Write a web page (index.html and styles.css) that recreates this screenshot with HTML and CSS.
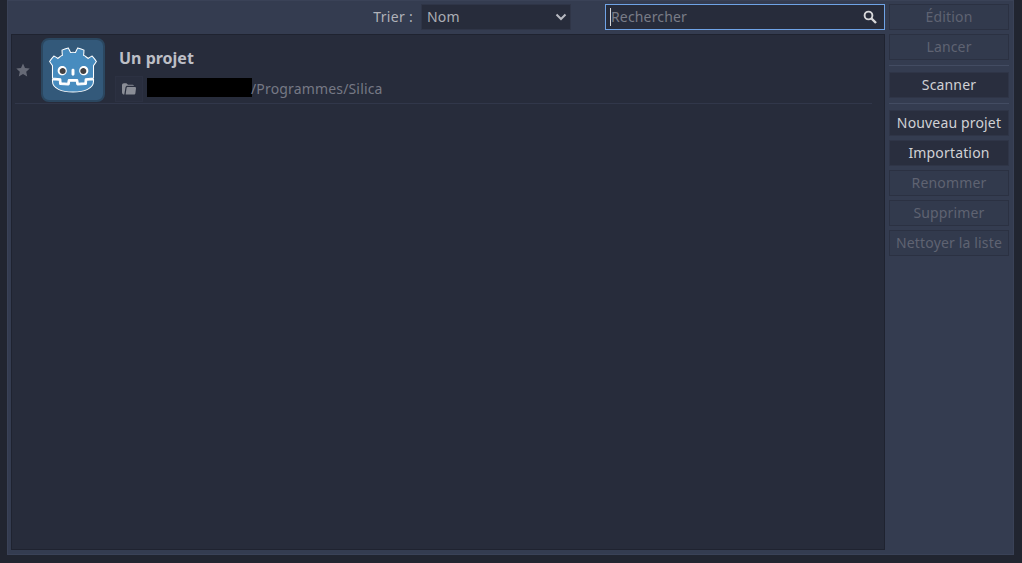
FILE: index.html
```html
<!DOCTYPE html>
<html lang="fr">
<head>
<meta charset="utf-8">
<title>Projets</title>
<link rel="stylesheet" href="styles.css">
</head>
<body>
<div class="window">
  <main class="main">
    <div class="toolbar">
      <span class="sort-label">Trier :</span>
      <div class="select">
        <span class="field-text">Nom</span>
        <svg class="chevron" width="12" height="8" viewBox="0 0 12 8"><path d="M1.5 1.5 6 6l4.5-4.5" fill="none" stroke="#b8bac2" stroke-width="2"/></svg>
      </div>
      <div class="search">
        <span class="caret"></span>
        <span class="placeholder field-text">Rechercher</span>
        <svg class="search-icon" width="14" height="14" viewBox="0 0 14 14"><circle cx="5.5" cy="5.5" r="3.9" fill="none" stroke="#d8d8da" stroke-width="1.9"/><path d="M8.5 8.5 13 13" stroke="#d8d8da" stroke-width="2.4"/></svg>
      </div>
    </div>
    <div class="list">
      <div class="row">
        <svg class="star" width="14" height="14" viewBox="0 0 14 14"><path d="M7 .6 9 5l4.7.5-3.5 3.2 1 4.7L7 11l-4.2 2.4 1-4.7L.3 5.5 5 5z" fill="#666a76"/></svg>
        <svg class="logo" width="64" height="64" viewBox="0 0 128 128">
          <rect x="2" y="2" width="124" height="124" rx="14" fill="#33597a" stroke="#2b4760" stroke-width="4"/>
          <g transform="matrix(.10073078 0 0 .10073078 12.425923 2.256365)">
            <path d="m0 0s-.325 1.994-.515 1.976l-36.182-3.491c-2.879-.278-5.115-2.574-5.317-5.459l-.994-14.247-27.992-1.997-1.904 12.912c-.424 2.872-2.932 5.037-5.835 5.037h-38.188c-2.902 0-5.41-2.165-5.834-5.037l-1.905-12.912-27.992 1.997-.994 14.247c-.202 2.886-2.438 5.182-5.317 5.46l-36.2 3.49c-.187.018-.324-1.978-.511-1.978l-.049-7.83 30.658-4.944 1.004-14.374c.203-2.91 2.551-5.263 5.463-5.472l38.551-2.75c.146-.01.29-.016.434-.016 2.897 0 5.401 2.166 5.825 5.038l1.959 13.286h28.005l1.959-13.286c.423-2.871 2.93-5.037 5.831-5.037.142 0 .284.005.423.015l38.556 2.75c2.911.209 5.26 2.562 5.463 5.472l1.003 14.374 30.645 4.966z" fill="#fff" transform="matrix(4.162611 0 0 -4.162611 919.24059 771.67186)"/>
            <path d="m0 0v-47.514-6.035-5.492c.108-.001.216-.005.323-.015l36.196-3.49c1.896-.183 3.382-1.709 3.514-3.609l1.116-15.978 31.574-2.253 2.175 14.747c.282 1.912 1.922 3.329 3.856 3.329h38.188c1.933 0 3.573-1.417 3.855-3.329l2.175-14.747 31.575 2.253 1.115 15.978c.133 1.9 1.618 3.425 3.514 3.609l36.182 3.49c.107.01.214.014.322.015v4.711l.015.005v54.325c5.09692 6.4164715 9.92323 13.494208 13.621 19.449-5.651 9.62-12.575 18.217-19.976 26.182-6.864-3.455-13.531-7.369-19.828-11.534-3.151 3.132-6.7 5.694-10.186 8.372-3.425 2.751-7.285 4.768-10.946 7.118 1.09 8.117 1.629 16.108 1.846 24.448-9.446 4.754-19.519 7.906-29.708 10.17-4.068-6.837-7.788-14.241-11.028-21.479-3.842.642-7.702.88-11.567.926v.006c-.027 0-.052-.006-.075-.006-.024 0-.049.006-.073.006v-.006c-3.872-.046-7.729-.284-11.572-.926-3.238 7.238-6.956 14.642-11.03 21.479-10.184-2.264-20.258-5.416-29.703-10.17.216-8.34.755-16.331 1.848-24.448-3.668-2.35-7.523-4.367-10.949-7.118-3.481-2.678-7.036-5.24-10.188-8.372-6.297 4.165-12.962 8.079-19.828 11.534-7.401-7.965-14.321-16.562-19.974-26.182 4.4426579-6.973692 9.2079702-13.9828876 13.621-19.449z" fill="#478cbf" stroke="#fff" stroke-width="5" transform="matrix(4.162611 0 0 -4.162611 104.69892 525.90697)"/>
            <path d="m0 0-1.121-16.063c-.135-1.936-1.675-3.477-3.611-3.616l-38.555-2.751c-.094-.007-.188-.01-.281-.01-1.916 0-3.569 1.406-3.852 3.33l-2.211 14.994h-31.459l-2.211-14.994c-.297-2.018-2.101-3.469-4.133-3.32l-38.555 2.751c-1.936.139-3.476 1.68-3.611 3.616l-1.121 16.063-32.547 3.138c.015-3.498.06-7.33.06-8.093 0-34.374 43.605-50.896 97.781-51.086h.066.067c54.176.19 97.766 16.712 97.766 51.086 0 .777.047 4.593.063 8.093z" fill="#478cbf" stroke="#fff" stroke-width="5" transform="matrix(4.162611 0 0 -4.162611 784.07144 817.24284)"/>
            <path d="m0 0c0-12.052-9.765-21.815-21.813-21.815-12.042 0-21.81 9.763-21.81 21.815 0 12.044 9.768 21.802 21.81 21.802 12.048 0 21.813-9.758 21.813-21.802" fill="#fff" transform="matrix(4.162611 0 0 -4.162611 389.21484 625.67104)"/>
            <path d="m0 0c0-7.994-6.479-14.473-14.479-14.473-7.996 0-14.479 6.479-14.479 14.473s6.483 14.479 14.479 14.479c8 0 14.479-6.485 14.479-14.479" fill="#414042" transform="matrix(4.162611 0 0 -4.162611 367.36686 631.05679)"/>
            <path d="m0 0c-3.878 0-7.021 2.858-7.021 6.381v20.081c0 3.52 3.143 6.381 7.021 6.381s7.028-2.861 7.028-6.381v-20.081c0-3.523-3.15-6.381-7.028-6.381" fill="#fff" transform="matrix(4.162611 0 0 -4.162611 511.99336 724.73954)"/>
            <path d="m0 0c0-12.052 9.765-21.815 21.815-21.815 12.041 0 21.808 9.763 21.808 21.815 0 12.044-9.767 21.802-21.808 21.802-12.05 0-21.815-9.758-21.815-21.802" fill="#fff" transform="matrix(4.162611 0 0 -4.162611 634.78706 625.67104)"/>
            <path d="m0 0c0-7.994 6.477-14.473 14.471-14.473 8.002 0 14.479 6.479 14.479 14.473s-6.477 14.479-14.479 14.479c-7.994 0-14.471-6.485-14.471-14.479" fill="#414042" transform="matrix(4.162611 0 0 -4.162611 656.64056 631.05679)"/>
          </g>
        </svg>
        <div class="info">
          <div class="name">Un projet</div>
          <div class="path-line">
            <div class="folder-btn">
              <svg width="16" height="14" viewBox="0 0 16 14"><path d="M1 3.2C1 2 1.8 1.2 3 1.2h2.4L7 2.8h4.6c.7 0 1.2.4 1.4 1H6.4c-1 0-1.7.6-1.9 1.5L3.3 12.6C2 12.5 1 11.6 1 10.4z" fill="#8a8d96"/><path d="M6.4 5h7.4c.8 0 1.3.6 1.2 1.3l-.6 5c-.1.8-.7 1.3-1.4 1.3H4.6l1-6.8c.1-.5.4-.8.8-.8z" fill="#8a8d96"/></svg>
            </div>
            <span class="redacted"></span>
            <span class="path">/Programmes/Silica</span>
          </div>
        </div>
      </div>
    </div>
  </main>
  <aside class="actions">
    <button class="btn off">Édition</button>
    <button class="btn off">Lancer</button>
    <hr class="sep">
    <button class="btn">Scanner</button>
    <hr class="sep">
    <button class="btn">Nouveau projet</button>
    <button class="btn">Importation</button>
    <button class="btn off">Renommer</button>
    <button class="btn off">Supprimer</button>
    <button class="btn off">Nettoyer la liste</button>
  </aside>
</div>
</body>
</html>
```

FILE: styles.css
```css
* { box-sizing: border-box; }
html, body { height: 100%; }
body {
  margin: 0;
  background: #212530;
  font-family: "Noto Sans", sans-serif;
  font-size: 14px;
  letter-spacing: .16px;
  color: #d4d5d9;
  overflow: hidden;
}
.window {
  display: flex;
  width: 1007px;
  height: 555px;
  margin-left: 7px;
  padding: 4px 5px 5px 4px;
  gap: 4px;
  background: #343c50;
  box-shadow: inset 0 0 0 1px #3a4257;
}
.main { flex: 1; display: flex; flex-direction: column; gap: 4px; min-width: 0; }
.toolbar { display: flex; align-items: center; height: 26px; justify-content: flex-end; }
.sort-label { color: #b0b2b9; margin: -2px 8px 0 0; letter-spacing: .3px; }
.field-text { margin-top: -2px; }
.select {
  width: 150px;
  height: 26px;
  margin-right: 34px;
  padding: 0 3px 0 5px;
  display: flex;
  align-items: center;
  justify-content: space-between;
  background: #272c3b;
  border: 1px solid #2f3547;
  color: #acaeb5;
}
.search {
  width: 280px;
  height: 26px;
  padding: 0 7px 0 4px;
  display: flex;
  align-items: center;
  background: #272c3b;
  border: 1px solid #6fa3e6;
}
.caret { width: 1px; height: 18px; background: #d8d8da; }
.placeholder { flex: 1; color: #797c87; }
.list {
  flex: 1;
  background: #272c3b;
  border: 1px solid #1f2330;
  padding: 3px 12px 0 3px;
}
.row {
  display: flex;
  height: 66px;
  border-bottom: 1px solid #31374a;
  align-items: flex-start;
}
.star { margin: 25px 0 0 1px; }
.logo { margin-left: 11px; flex: none; }
.info { margin-left: 10px; display: flex; flex-direction: column; }
.name { font-weight: 700; font-size: 16px; line-height: 20px; letter-spacing: 0; margin: 10px 0 0 4px; color: #bdbfc6; }
.path-line { display: flex; align-items: center; margin-top: 8px; height: 26px; }
.folder-btn {
  width: 28px;
  height: 26px;
  display: flex;
  align-items: center;
  justify-content: center;
  background: #292e3e;
  border: 1px solid #2c3142;
}
.redacted { width: 105px; height: 19px; margin: -3px 0 0 4px; background: #000; }
.path { color: #767985; margin: -2px 0 0 -1px; }
.actions { width: 120px; display: flex; flex-direction: column; gap: 4px; flex: none; }
.btn {
  height: 26px;
  padding: 0 0 2px;
  font: inherit;
  letter-spacing: inherit;
  color: #d0d1d5;
  background: #292e3e;
  border: 1px solid #2f3547;
  white-space: nowrap;
}
.btn.off {
  color: #5f6372;
  background: #323a4d;
  border-color: #2b3142;
}
.sep {
  flex: none;
  width: 100%;
  height: 1px;
  margin: 1px 0 2px;
  border: 0;
  background: #434c62;
}
```
